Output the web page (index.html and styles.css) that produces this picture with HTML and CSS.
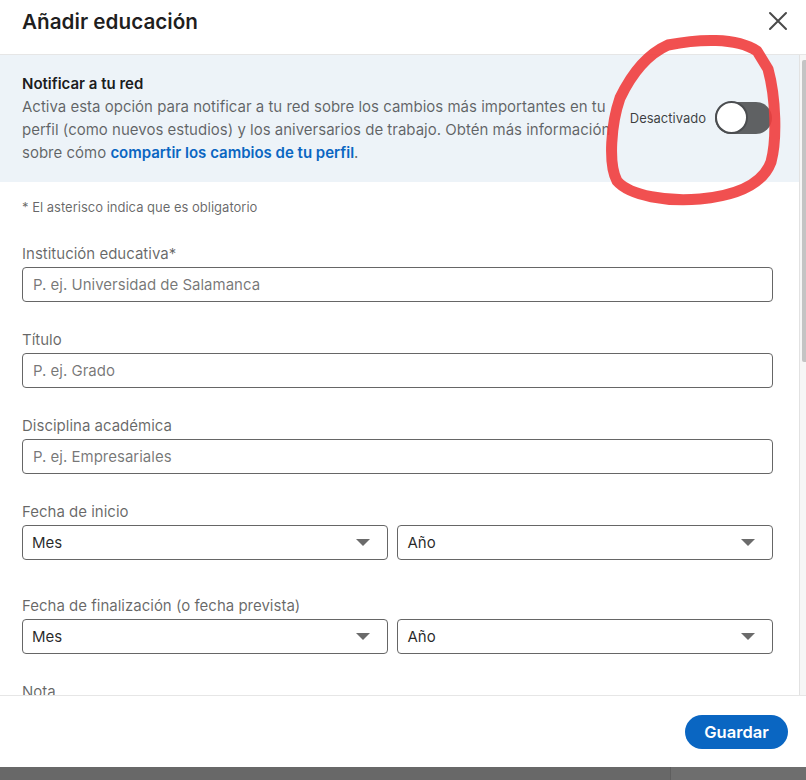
FILE: index.html
```html
<!DOCTYPE html>
<html lang="es">
<head>
<meta charset="utf-8">
<title>Añadir educación</title>
<link rel="stylesheet" href="styles.css">
</head>
<body>
<div class="modal">
  <header class="modal-header">
    <h2 class="modal-title">Añadir educación</h2>
    <button class="close-btn" aria-label="Cerrar">
      <svg width="20" height="20" viewBox="0 0 20 20"><path d="M2 2 L18 18 M18 2 L2 18" stroke="#4a4a4a" stroke-width="2" stroke-linecap="round" fill="none"/></svg>
    </button>
  </header>
  <div class="modal-body">
    <div class="content">
      <section class="notify">
        <div class="notify-text">
          <div class="notify-title">Notificar a tu red</div>
          <p class="notify-desc">Activa esta opción para notificar a tu red sobre los cambios más importantes en tu<br>perfil (como nuevos estudios) y los aniversarios de trabajo. Obtén más información<br>sobre cómo <a class="link" href="#">compartir los cambios de tu perfil</a>.</p>
        </div>
        <div class="toggle-wrap">
          <span class="toggle-label">Desactivado</span>
          <span class="toggle"><span class="knob"></span></span>
        </div>
      </section>
      <div class="form">
        <p class="req-note">* El asterisco indica que es obligatorio</p>
        <div class="field">
          <label class="label">Institución educativa*</label>
          <div class="input">P. ej. Universidad de Salamanca</div>
        </div>
        <div class="field">
          <label class="label">Título</label>
          <div class="input">P. ej. Grado</div>
        </div>
        <div class="field">
          <label class="label">Disciplina académica</label>
          <div class="input">P. ej. Empresariales</div>
        </div>
        <div class="field">
          <label class="label">Fecha de inicio</label>
          <div class="date-row">
            <div class="select">Mes<span class="caret"></span></div>
            <div class="select">Año<span class="caret"></span></div>
          </div>
        </div>
        <div class="field field-wide">
          <label class="label">Fecha de finalización (o fecha prevista)</label>
          <div class="date-row">
            <div class="select">Mes<span class="caret"></span></div>
            <div class="select">Año<span class="caret"></span></div>
          </div>
        </div>
        <div class="field">
          <label class="label">Nota</label>
        </div>
      </div>
    </div>
    <div class="scrollbar"><div class="thumb"></div></div>
  </div>
  <footer class="modal-footer">
    <button class="save-btn">Guardar</button>
  </footer>
  <div class="backdrop-strip"><div class="strip-left"></div><div class="strip-right"></div></div>
</div>
<svg class="annotation" width="806" height="780" viewBox="0 0 806 780">
  <path d="M668 45 C698 39, 736 37, 757 51 L768 69 C776 98, 777 140, 771 162 C762 186, 732 196, 700 199 C668 202, 630 196, 617 181 C608 164, 611 124, 620 98 C633 71, 650 53, 668 45 Z" fill="none" stroke="#ef3d3d" stroke-width="11" stroke-linejoin="round" stroke-opacity="0.9"/>
</svg>
</body>
</html>
```
FILE: styles.css
```css
* { box-sizing: border-box; }
html, body { margin: 0; padding: 0; }
body {
  width: 806px;
  height: 780px;
  overflow: hidden;
  background: #fff;
  font-family: Inter, Roboto, "Noto Sans", "Liberation Sans", sans-serif;
  color: rgba(0,0,0,0.9);
  position: relative;
}
.modal { display: flex; flex-direction: column; height: 780px; }
.modal-header {
  height: 55px;
  flex: none;
  display: flex;
  align-items: center;
  justify-content: space-between;
  padding: 0 18px 0 22px;
  border-bottom: 1px solid #e6e6e6;
}
.modal-title {
  margin: 0 0 12px;
  font-size: 20.7px;
  font-weight: 600;
  color: rgba(0,0,0,0.88);
}
.close-btn {
  border: 0; background: none; padding: 0; margin: 0 0 12px;
  width: 20px; height: 20px; display: flex;
}
.modal-body { flex: none; height: 640px; display: flex; overflow: hidden; }
.content { flex: 1; min-width: 0; }
.scrollbar {
  width: 7px; flex: none;
  background: #f6f6f6;
  border-left: 1px solid #e2e2e2;
  padding: 5px 0 0 2px;
}
.thumb { width: 4px; height: 302px; background: #c4c4c4; border-radius: 2px 0 0 2px; }
.notify {
  background: #edf3f8;
  padding: 18px 27px 18px 22px;
  display: flex;
  align-items: center;
  justify-content: space-between;
}
.notify-title { font-size: 15px; font-weight: 600; line-height: 22px; color: rgba(0,0,0,0.9); }
.notify-desc {
  margin: 0;
  font-size: 15px;
  line-height: 23px;
  color: rgba(0,0,0,0.6);
  white-space: nowrap;
}
.link { color: #0a66c2; font-weight: 600; text-decoration: none; }
.toggle-wrap { display: flex; align-items: center; gap: 9px; margin-bottom: 2px; }
.toggle-label { font-size: 13px; color: rgba(0,0,0,0.75); }
.toggle {
  width: 57px; height: 32px;
  background: #5f6163;
  border-radius: 16px;
  display: flex; align-items: center;
}
.knob {
  width: 33px; height: 33px;
  border-radius: 50%;
  background: #fff;
  border: 2px solid #4b4d50;
}
.form { padding: 0 26px 0 22px; }
.req-note { margin: 16px 0 0; font-size: 13px; line-height: 18px; color: rgba(0,0,0,0.6); }
.field { margin-top: 28px; }
.field-wide { margin-top: 36px; }
.label { display: block; font-size: 15px; line-height: 20px; color: rgba(0,0,0,0.6); margin-bottom: 3px; }
.input {
  height: 35px;
  border: 1px solid #666;
  border-radius: 4px;
  padding: 0 10px;
  display: flex; align-items: center;
  font-size: 15px;
  color: rgba(0,0,0,0.55);
}
.date-row { display: grid; grid-template-columns: 366fr 375fr; gap: 9px; }
.select {
  height: 35px;
  border: 1px solid #666;
  border-radius: 4px;
  padding: 0 17px 0 9px;
  display: flex; align-items: center; justify-content: space-between;
  font-size: 15px;
  color: rgba(0,0,0,0.85);
}
.caret {
  width: 0; height: 0;
  border-left: 7px solid transparent;
  border-right: 7px solid transparent;
  border-top: 7px solid #6b6b6b;
}
.modal-footer {
  height: 72px; flex: none;
  border-top: 1px solid #e6e6e6;
  display: flex; align-items: center; justify-content: flex-end;
  padding: 0 18px 0 0;
  background: #fff;
}
.save-btn {
  height: 34px;
  width: 103px;
  border: 0;
  border-radius: 17px;
  background: #0a66c2;
  color: #fff;
  font-family: inherit;
  font-size: 16.5px;
  font-weight: 600;
}
.backdrop-strip { flex: 1; display: flex; }
.strip-left { width: 670px; background: #686868; }
.strip-right { flex: 1; background: #6e6e6e; border-left: 1px solid #5e5e5e; }
.annotation { position: absolute; left: 0; top: 0; pointer-events: none; }
```
